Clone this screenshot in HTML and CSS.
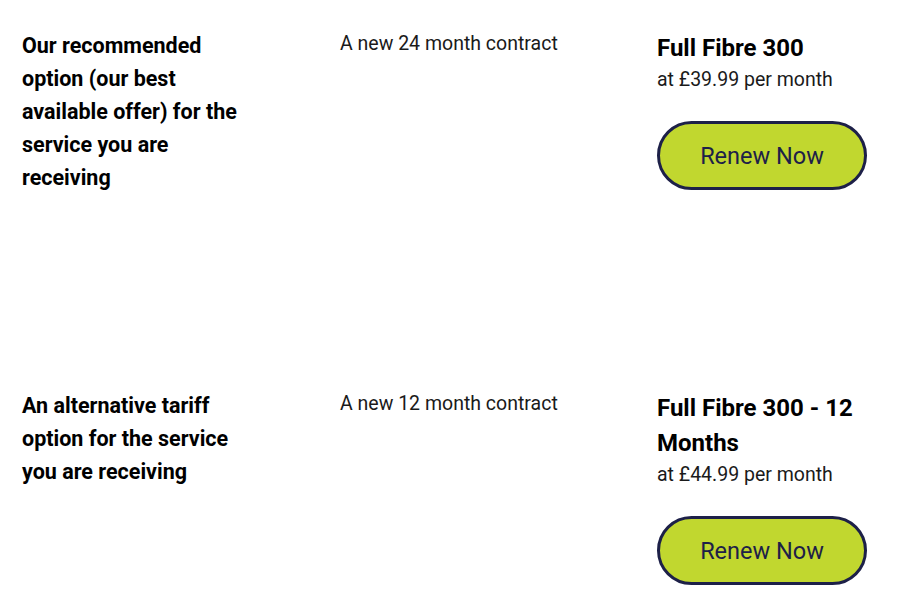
FILE: index.html
```html
<!DOCTYPE html>
<html lang="en">
<head>
<meta charset="UTF-8">
<meta name="viewport" content="width=device-width, initial-scale=1.0">
<title>Renewal options</title>
<link rel="stylesheet" href="styles.css">
</head>
<body>

<div class="offers">
<div class="offer">
<div class="label">Our recommended option (our best available offer) for the service you are receiving</div>
<div class="term">A new 24 month contract</div>
<div class="plan">
<div class="plan-name">Full Fibre 300</div>
<div class="price">at £39.99 per month</div>
<button class="renew">Renew Now</button>
</div>
</div>

<div class="offer">
<div class="label">An alternative tariff option for the service you are receiving</div>
<div class="term">A new 12 month contract</div>
<div class="plan">
<div class="plan-name">Full Fibre 300 - 12 Months</div>
<div class="price">at £44.99 per month</div>
<button class="renew">Renew Now</button>
</div>
</div>
</div>

</body>
</html>
```

FILE: styles.css
```css
body {
margin: 0;
padding: 0;
background: #fff;
font-family: Roboto, "Liberation Sans", Arial, sans-serif;
color: #000;
}

.offers {
padding: 29px 0 0 22px;
}

.offer {
display: grid;
grid-template-columns: 318px 317px 245px;
align-items: start;
margin-bottom: 195px;
}

.label {
width: 232px;
font-size: 21.5px;
font-weight: 700;
line-height: 33px;
}

.term {
padding-top: 1px;
font-size: 19.5px;
line-height: 28px;
color: #1a1a1a;
}

.plan {
padding-top: 2px;
}

.plan-name {
font-size: 24px;
font-weight: 700;
line-height: 35px;
}

.price {
font-size: 19.5px;
line-height: 28px;
color: #1a1a1a;
}

.renew {
display: block;
margin-top: 27px;
width: 210px;
height: 69px;
border: 3px solid #1d2048;
border-radius: 35px;
background-color: #c1d72f;
color: #1d2048;
font-family: Roboto, "Liberation Sans", Arial, sans-serif;
font-size: 23.5px;
padding: 0;
cursor: pointer;
}
```
